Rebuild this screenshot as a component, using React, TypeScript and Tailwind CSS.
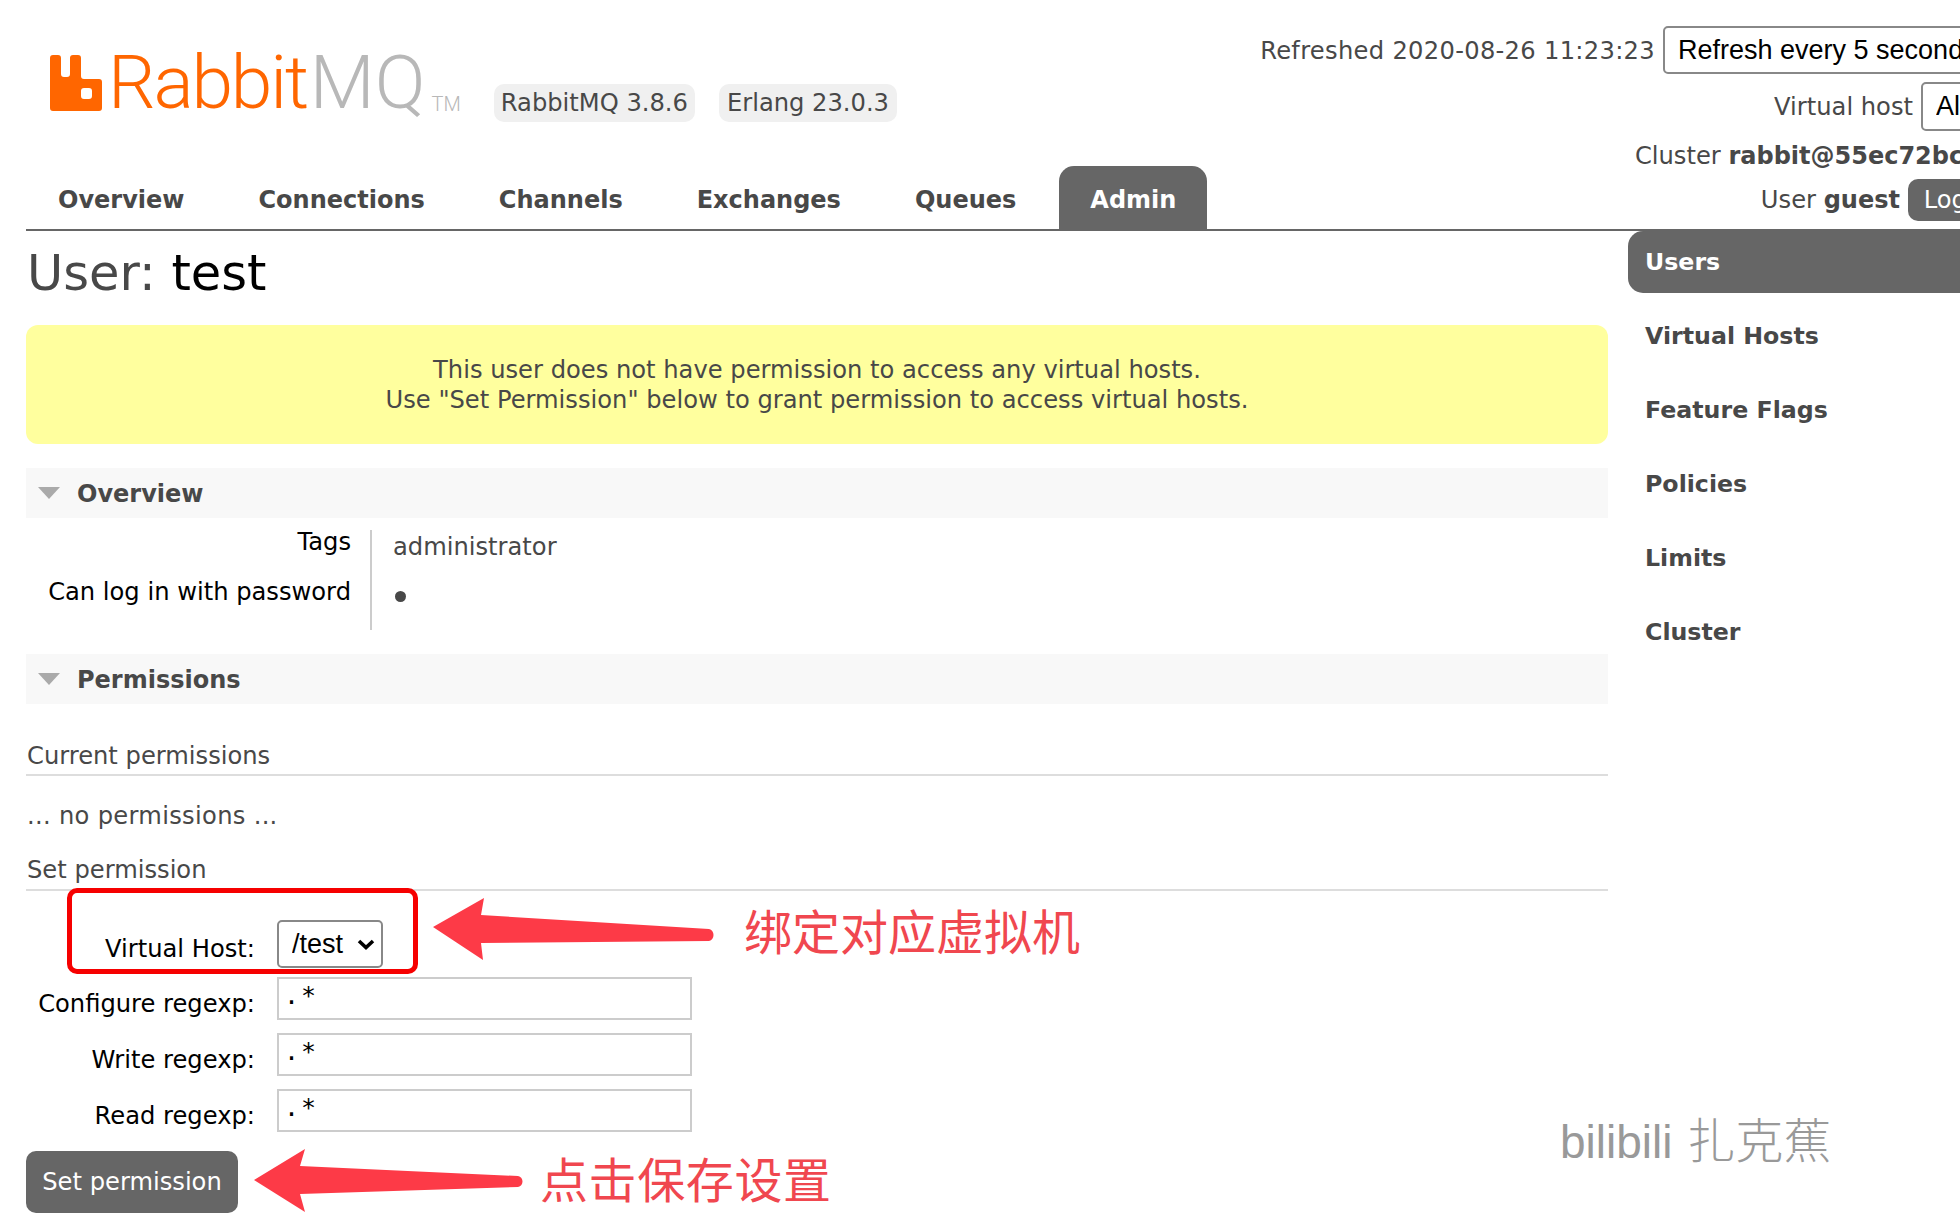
import React from "react";

const sans = "font-['DejaVu_Sans',sans-serif]";

function Arrow({ w, h, d }: { w: number; h: number; d: string }) {
  return (
    <svg width={w} height={h} viewBox={`0 0 ${w} ${h}`} className="shrink-0">
      <path d={d} fill="#fd3a47" />
    </svg>
  );
}

function Section({ title }: { title: string }) {
  return (
    <div className="flex h-[50px] items-center bg-[#f8f8f8] pl-[12px]">
      <svg width="22" height="12" viewBox="0 0 22 12" className="mr-[17px]">
        <path d="M0 0H22L11 12Z" fill="#aaaaaa" />
      </svg>
      <span className="pt-[2px] text-[24px] font-bold text-[#484848]">{title}</span>
    </div>
  );
}

function Field({ label }: { label: string }) {
  return (
    <div className="flex h-[56px] items-center">
      <label className="w-[229px] pt-[12px] text-right text-[24.2px] text-black">{label}</label>
      <input
        readOnly
        value=".*"
        className="ml-[22px] h-[43px] w-[415px] border-2 border-[#cccccc] bg-white px-[5px] pb-[6px] font-['DejaVu_Sans_Mono',monospace] text-[25px] tracking-[2px] text-black outline-none"
      />
    </div>
  );
}

export default function App() {
  const nav = ["Overview", "Connections", "Channels", "Exchanges", "Queues"];
  const side = ["Virtual Hosts", "Feature Flags", "Policies", "Limits", "Cluster"];
  return (
    <div className={`relative h-[1226px] w-[1960px] overflow-hidden bg-white text-[#484848] ${sans}`}>
      <div className="w-[2030px]">
        {/* header */}
        <header className="relative ml-[26px] h-[231px] border-b-2 border-[#666666]">
          <div className="flex h-[166px] justify-between">
            <div className="flex items-start pl-[24px] pt-[55px]">
              <svg width="52" height="56" viewBox="0 0 52 56" className="shrink-0">
                <path
                  fillRule="evenodd"
                  d="M3 0H8A3 3 0 0 1 11 3V19A3 3 0 0 0 14 22H17A3 3 0 0 0 20 19V3A3 3 0 0 1 23 0H28A3 3 0 0 1 31 3V21A3 3 0 0 0 34 24H49A3 3 0 0 1 52 27V53A3 3 0 0 1 49 56H3A3 3 0 0 1 0 53V3A3 3 0 0 1 3 0ZM34 33A3 3 0 0 0 31 36V41A3 3 0 0 0 34 44H39A3 3 0 0 0 42 41V36A3 3 0 0 0 39 33Z"
                  fill="#ff6600"
                />
              </svg>
              <div className="ml-[6px] mt-[3px] flex h-[55px] items-end font-['Roboto',sans-serif] font-light leading-none">
                <span className="text-[75px] leading-[62px] tracking-[-2.2px] text-[#ff6600]">Rabbit</span>
                <span className="ml-[3px] text-[75px] leading-[62px] text-[#b8b8b8]">MQ</span>
                <span className="ml-[6px] text-[20px] leading-[18px] text-[#b8b8b8]">TM</span>
              </div>
              <div className="ml-[33px] mt-[29px] flex gap-[24px] text-[24.2px] leading-none">
                <span className="flex h-[38px] items-center rounded-[10px] bg-[#f0f0f0] px-[7px]">RabbitMQ 3.8.6</span>
                <span className="flex h-[38px] items-center rounded-[10px] bg-[#f0f0f0] px-[8px]">Erlang 23.0.3</span>
              </div>
            </div>
            <div className="absolute right-0 top-0 flex flex-col items-end text-[24.2px]">
              <div className="mt-[26px] flex h-[48px] items-center">
                <span className="pt-[2px] tracking-[0.3px]">Refreshed 2020-08-26 11:23:23</span>
                <select className="ml-[8px] h-[48px] w-[367px] appearance-none rounded-[5px] border-2 border-[#888888] bg-white pl-[13px] font-['Liberation_Sans',sans-serif] text-[27px] text-black">
                  <option>Refresh every 5 seconds</option>
                </select>
              </div>
              <div className="mt-[8px] flex h-[49px] items-center">
                <span className="pt-[2px]">Virtual host</span>
                <select className="ml-[8px] h-[49px] w-[109px] appearance-none rounded-[5px] border-2 border-[#888888] bg-white pl-[13px] font-['Liberation_Sans',sans-serif] text-[27px] text-black">
                  <option>All</option>
                </select>
              </div>
              <div className="mt-[10px] h-[30px] whitespace-nowrap leading-[30px]">
                Cluster <b className="text-[24px]">rabbit@55ec72bc67ab</b>
              </div>
              <div className="mt-[8px] flex h-[42px] items-center">
                <span>
                  User <b className="text-[24px]">guest</b>
                </span>
                <button className="ml-[8px] h-[42px] w-[122px] rounded-[10px] bg-[#666666] text-white">Log out</button>
              </div>
            </div>
          </div>
          <nav className="ml-[1px] flex h-[64px] gap-[12px] text-[24px] font-bold">
            {nav.map((n) => (
              <a key={n} className="flex items-center px-[31px] pt-[3px] text-[#484848]">
                {n}
              </a>
            ))}
            <a className="flex items-center rounded-t-[15px] bg-[#666666] px-[31px] pt-[3px] text-white">Admin</a>
          </nav>
        </header>

        <div className="flex">
          {/* main */}
          <main className="ml-[26px] w-[1582px]">
            <h1 className="mt-[13px] h-[66px] pl-[1px] text-[49.5px] leading-[58px] text-[#484848]">
              User: <span className="text-black">test</span>
            </h1>
            <div className="mt-[15px] flex h-[119px] flex-col justify-center rounded-[12px] bg-[#ffff9e] text-center text-[24.2px] leading-[30px]">
              <p>This user does not have permission to access any virtual hosts.</p>
              <p>Use "Set Permission" below to grant permission to access virtual hosts.</p>
            </div>

            <div className="mt-[24px]">
              <Section title="Overview" />
            </div>
            <div className="mt-[12px] flex h-[100px] text-[24.2px]">
              <div className="flex w-[346px] flex-col items-end border-r-2 border-[#cccccc] pr-[19px] text-black">
                <span className="h-[50px] leading-[24px]">Tags</span>
                <span className="mt-[-13px] leading-[50px]">Can log in with password</span>
              </div>
              <div className="pl-[21px]">
                <div className="h-[50px] leading-[34px] text-[#484848]">administrator</div>
                <div className="ml-[2px] mt-[11px] h-[11px] w-[11px] rounded-full bg-[#484848]" />
              </div>
            </div>

            <div className="mt-[24px]">
              <Section title="Permissions" />
            </div>

            <h3 className="mt-[36px] border-b-2 border-[#dddddd] pb-[2px] pl-[1px] text-[24.2px] leading-[32px]">Current permissions</h3>
            <p className="mt-[25px] pl-[1px] text-[24.2px] leading-[30px] tracking-[0.3px]">... no permissions ...</p>
            <h3 className="mt-[23px] border-b-2 border-[#dddddd] pb-[3px] pl-[1px] text-[24.2px] leading-[32px]">Set permission</h3>

            <div className="relative">
              <div className="flex h-[79px] items-end">
                <label className="w-[229px] pb-[6px] text-right text-[24.2px] leading-[30px] text-black">Virtual Host:</label>
                <div className="relative mb-[2px] ml-[22px] h-[48px] w-[106px]">
                  <select className="h-full w-full appearance-none rounded-[5px] border-2 border-[#888888] bg-white pl-[13px] font-['Liberation_Sans',sans-serif] text-[27px] text-black">
                    <option>/test</option>
                  </select>
                  <svg width="18" height="11" viewBox="0 0 18 11" className="pointer-events-none absolute left-[80px] top-[19px]">
                    <path d="M2 2L9 8.5L16 2" fill="none" stroke="#000000" strokeWidth="3.6" />
                  </svg>
                </div>
              </div>
              <div className="absolute left-[41px] top-[-3px] h-[86px] w-[351px] rounded-[10px] border-[5px] border-[#f60000]" />
              <Field label="Configure regexp:" />
              <Field label="Write regexp:" />
              <Field label="Read regexp:" />
              <button className="mt-[13px] block h-[62px] w-[212px] rounded-[10px] bg-[#666666] text-[24.2px] text-white">Set permission</button>

              <div className="absolute left-[407px] top-[7px] flex items-start">
                <Arrow w={282} h={63} d="M0 29L51 0L48 17L276 31C282 32 282 42 276 43L48 45L50 62Z" />
                <span className="ml-[29px] mt-[3px] whitespace-nowrap font-['Noto_Sans_CJK_SC',sans-serif] text-[48px] font-normal leading-[56px] text-[#f0474f]">绑定对应虚拟机</span>
              </div>
              <div className="absolute left-[228px] top-[258px] flex items-start">
                <Arrow w={270} h={64} d="M0 31L51 0L46 17L264 27C270 28 270 37 264 38L46 45L51 63Z" />
                <span className="ml-[16px] whitespace-nowrap font-['Noto_Sans_CJK_SC',sans-serif] text-[48px] font-normal leading-[56px] tracking-[0.6px] text-[#f0474f]">点击保存设置</span>
              </div>
            </div>
          </main>

          {/* sidebar */}
          <aside className="ml-[20px] flex-1 text-[23.7px] font-bold">
            <div className="flex h-[62px] items-center rounded-l-[15px] bg-[#666666] pl-[17px] pt-[1px] text-white">Users</div>
            {side.map((s) => (
              <div key={s} className="flex h-[74px] items-center pl-[17px] pt-[13px] text-[#484848]">
                {s}
              </div>
            ))}
          </aside>
        </div>
      </div>
      <div className="absolute left-[1560px] top-[1107px] whitespace-nowrap font-['Liberation_Sans','Noto_Sans_CJK_SC',sans-serif] text-[46px] font-normal leading-[60px] text-[#999999]">
        bilibili <span className="ml-[2px] font-['Noto_Sans_CJK_SC',sans-serif] text-[48px] font-light">扎克蕉</span>
      </div>
    </div>
  );
}
